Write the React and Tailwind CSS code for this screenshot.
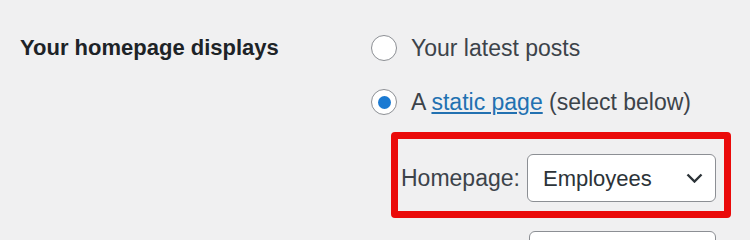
import React from "react";

function Radio({ checked }) {
	return (
		<span className="flex size-[26px] shrink-0 items-center justify-center rounded-full border border-[#8c8f94] bg-white">
			{checked && <span className="size-[13px] rounded-full bg-[#1b7ad2]" />}
		</span>
	);
}

function Select({ value }) {
	return (
		<div className="flex h-[48px] w-[189px] items-center justify-between rounded-[6px] border border-[#8c8f94] bg-white pl-[15px] pr-[12px] text-[22px] text-[#2c3338]">
			<span>{value}</span>
			<svg width="17" height="10" viewBox="0 0 17 10" fill="none">
				<path d="M1.5 1.5l7 7 7-7" stroke="#2c3338" strokeWidth="2.4" />
			</svg>
		</div>
	);
}

export default function App() {
	return (
		<div
			className="h-screen overflow-hidden bg-[#f0f0f1]"
			style={{ fontFamily: '"Liberation Sans", Arial, sans-serif' }}
		>
			<div className="flex">
				{/* Label column */}
				<div className="w-[371px] shrink-0 pl-[20px] pt-[35px]">
					<h2 className="text-[22px] font-bold leading-[26px] text-[#1d2327]">Your homepage displays</h2>
				</div>

				{/* Options */}
				<div className="flex flex-col pt-[35px]">
					<div className="flex flex-col gap-[28px] text-[23px] leading-[26px] text-[#3c434a]">
						<label className="flex items-center gap-[14px]">
							<Radio />
							<span>Your latest posts</span>
						</label>
						<label className="flex items-center gap-[14px]">
							<Radio checked />
							<span>
								A{" "}
								<a href="#" className="text-[#2271b1] underline">
									static page
								</a>{" "}
								(select below)
							</span>
						</label>
					</div>

					<div className="ml-[20px] mt-[17px] flex w-[340px] items-center gap-[9px] rounded-[4px] border-[7px] border-[#ea0a0a] pb-[9px] pl-[3px] pt-[15px]">
						<span className="w-[117px] text-[23px] text-[#3c434a]">Homepage:</span>
						<Select value="Employees" />
					</div>

					{/* Posts page select, cut off by the bottom edge */}
					<div className="ml-[158px] mt-[13px] h-[48px] w-[187px] rounded-[6px] border border-[#8c8f94] bg-white" />
				</div>
			</div>
		</div>
	);
}
